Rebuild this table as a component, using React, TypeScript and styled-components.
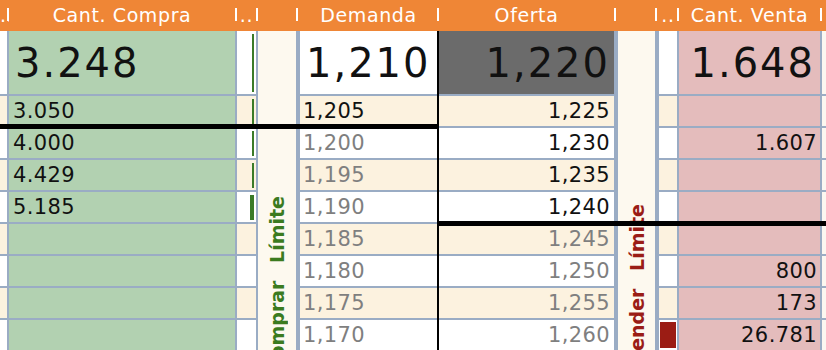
import React from 'react';
import styled, { createGlobalStyle } from 'styled-components';

interface Level {
  buy?: string
  buyBar?: number
  bid: string
  bidDim?: boolean
  ask: string
  askDim?: boolean
  sell?: string
  sellBar?: number
}

const BORDER = '#9aacc4';
const CREAM = '#fcf2df';
const LABEL_BG = '#fdf9ef';
const GREEN_BG = '#b2d1b1';
const PINK_BG = '#e4bcbc';
const DARK = '#6b6b6b';

const levels: Level[] = [
  { buy: '3.248', buyBar: 2, bid: '1,210', ask: '1,220', sell: '1.648' },
  { buy: '3.050', buyBar: 2, bid: '1,205', ask: '1,225' },
  { buy: '4.000', buyBar: 2, bid: '1,200', bidDim: true, ask: '1,230', sell: '1.607' },
  { buy: '4.429', buyBar: 2, bid: '1,195', bidDim: true, ask: '1,235' },
  { buy: '5.185', buyBar: 4, bid: '1,190', bidDim: true, ask: '1,240' },
  { bid: '1,185', bidDim: true, ask: '1,245', askDim: true },
  { bid: '1,180', bidDim: true, ask: '1,250', askDim: true, sell: '800' },
  { bid: '1,175', bidDim: true, ask: '1,255', askDim: true, sell: '173' },
  { bid: '1,170', bidDim: true, ask: '1,260', askDim: true, sell: '26.781', sellBar: 16 },
];

// white for the inside row and the even rows, cream for the odd ones
const stripe = (i: number) => (i % 2 === 1 ? CREAM : '#ffffff');

const App: React.FC = () => {
  return (
    <>
      <GlobalStyle />
      <Ladder>
        <Header>
          <HeadCell $w={7} $edge={2}>..</HeadCell>
          <HeadCell $w={226} $edge={2}>Cant. Compra</HeadCell>
          <HeadCell $w={19} $edge={2}>..</HeadCell>
          <HeadCell $w={38} $edge={4} />
          <HeadCell $w={137} $edge={2}>Demanda</HeadCell>
          <HeadCell $w={175} $edge={4}>Oferta</HeadCell>
          <HeadCell $w={37} $edge={4} />
          <HeadCell $w={18} $edge={2}>..</HeadCell>
          <HeadCell $w={141} $edge={2}>Cant. Venta</HeadCell>
        </Header>

        <Body>
          <Column $w={7} $edge={2}>
            {levels.map((l, i) => (
              <Cell key={i} $big={i === 0} $bg={stripe(i)} />
            ))}
          </Column>

          <Column $w={226} $edge={2}>
            {levels.map((l, i) => (
              <Cell key={i} $big={i === 0} $bg={GREEN_BG} $pad={i === 0 ? 6 : 4}>
                {l.buy}
              </Cell>
            ))}
          </Column>

          <Column $w={19} $edge={2}>
            {levels.map((l, i) => (
              <BarCell key={i} $big={i === 0} $bg={stripe(i)} $side="right">
                {l.buyBar ? <Bar $w={l.buyBar} $color="#3b7b27" /> : null}
              </BarCell>
            ))}
          </Column>

          <LabelColumn $w={38} $edge={4}>
            <VerticalLabel $color="#3b7b1f" $top={165}>Comprar Límite</VerticalLabel>
          </LabelColumn>

          <Column $w={137} $edge={2} $edgeColor="#000">
            {levels.map((l, i) => (
              <Cell key={i} $big={i === 0} $bg={stripe(i)} $dim={l.bidDim} $pad={i === 0 ? 6 : 3}>
                {l.bid}
              </Cell>
            ))}
          </Column>

          <Column $w={175} $edge={4}>
            {levels.map((l, i) => (
              <Cell
                key={i}
                $big={i === 0}
                $bg={i === 0 ? DARK : stripe(i)}
                $dim={l.askDim}
                $right
                $pad={4}
              >
                {l.ask}
              </Cell>
            ))}
          </Column>

          <LabelColumn $w={37} $edge={4}>
            <VerticalLabel $color="#9a1d16" $top={173}>Vender Límite</VerticalLabel>
          </LabelColumn>

          <Column $w={18} $edge={2}>
            {levels.map((l, i) => (
              <BarCell key={i} $big={i === 0} $bg={stripe(i)} $side="left">
                {l.sellBar ? <Bar $w={l.sellBar} $color="#9b1c14" /> : null}
              </BarCell>
            ))}
          </Column>

          <Column $w={141} $edge={2}>
            {levels.map((l, i) => (
              <Cell key={i} $big={i === 0} $bg={PINK_BG} $right $pad={i === 0 ? 5 : 3}>
                {l.sell}
              </Cell>
            ))}
          </Column>

          <Column $fill>
            {levels.map((l, i) => (
              <Cell key={i} $big={i === 0} $bg="#fbf7f0" />
            ))}
          </Column>
        </Body>

        {/* market lines across the ladder */}
        <MarketLine style={{ top: 124, left: 0, width: 437 }} />
        <MarketLine style={{ top: 221, left: 439, right: 0 }} />
      </Ladder>
    </>
  );
};

const GlobalStyle = createGlobalStyle`
  html, body {
    margin: 0;
    padding: 0;
    background: #fff;
    overflow: hidden;
  }
  body {
    font-family: "DejaVu Sans", Verdana, sans-serif;
  }
`;

const Ladder = styled.div`
  position: relative;
  width: 826px;
  height: 350px;
  overflow: hidden;
`;

const Header = styled.div`
  display: flex;
  height: 31px;
  background: #ef8636;
`;

const HeadCell = styled.div<{ $w: number; $edge: number }>`
  box-sizing: content-box;
  width: ${p => p.$w}px;
  padding-right: ${p => p.$edge}px;
  flex-shrink: 0;
  position: relative;
  overflow: hidden;
  color: #fff;
  font-size: 19px;
  letter-spacing: 0.6px;
  line-height: 31px;
  text-align: center;
  white-space: nowrap;

  &::after {
    content: '';
    position: absolute;
    top: 8px;
    right: ${p => p.$edge - 2}px;
    width: 2px;
    height: 13px;
    background: #fff;
  }
`;

const Body = styled.div`
  display: flex;
  align-items: stretch;
`;

const Column = styled.div<{ $w?: number; $edge?: number; $edgeColor?: string; $fill?: boolean }>`
  display: flex;
  flex-direction: column;
  gap: 2px;
  background: ${BORDER};
  ${p => (p.$fill ? 'flex: 1;' : `width: ${p.$w}px; flex-shrink: 0;`)}
  border-right: ${p => p.$edge ?? 0}px solid ${p => p.$edgeColor ?? BORDER};
  overflow: hidden;
`;

const LabelColumn = styled(Column)`
  background: ${LABEL_BG};
  align-items: center;
  gap: 0;
`;

const Cell = styled.div<{ $big?: boolean; $bg: string; $right?: boolean; $dim?: boolean; $pad?: number }>`
  flex-shrink: 0;
  box-sizing: border-box;
  height: ${p => (p.$big ? 63 : 30)}px;
  display: flex;
  align-items: center;
  justify-content: ${p => (p.$right ? 'flex-end' : 'flex-start')};
  padding: 0 ${p => p.$pad ?? 0}px ${p => (p.$big ? 0 : 1)}px;
  background: ${p => p.$bg};
  color: ${p => (p.$dim ? '#7f7f7f' : '#111')};
  font-size: ${p => (p.$big ? 40 : 21)}px;
  letter-spacing: ${p => (p.$big ? 2 : 0.4)}px;
  white-space: nowrap;
  overflow: hidden;
`;

const BarCell = styled.div<{ $big?: boolean; $bg: string; $side: 'left' | 'right' }>`
  flex-shrink: 0;
  box-sizing: border-box;
  height: ${p => (p.$big ? 63 : 30)}px;
  display: flex;
  justify-content: ${p => (p.$side === 'right' ? 'flex-end' : 'flex-start')};
  padding: ${p => (p.$side === 'right' ? '3px 2px 2px 0' : '2px 0 2px 1px')};
  background: ${p => p.$bg};
`;

const Bar = styled.div<{ $w: number; $color: string }>`
  width: ${p => p.$w}px;
  background: ${p => p.$color};
`;

const VerticalLabel = styled.div<{ $color: string; $top: number }>`
  flex-shrink: 0;
  margin-top: ${p => p.$top}px;
  writing-mode: vertical-rl;
  transform: rotate(180deg);
  color: ${p => p.$color};
  font-size: 19px;
  font-weight: bold;
  word-spacing: 11px;
  white-space: nowrap;
`;

const MarketLine = styled.div`
  position: absolute;
  height: 5px;
  background: #000;
`;

export default App;
